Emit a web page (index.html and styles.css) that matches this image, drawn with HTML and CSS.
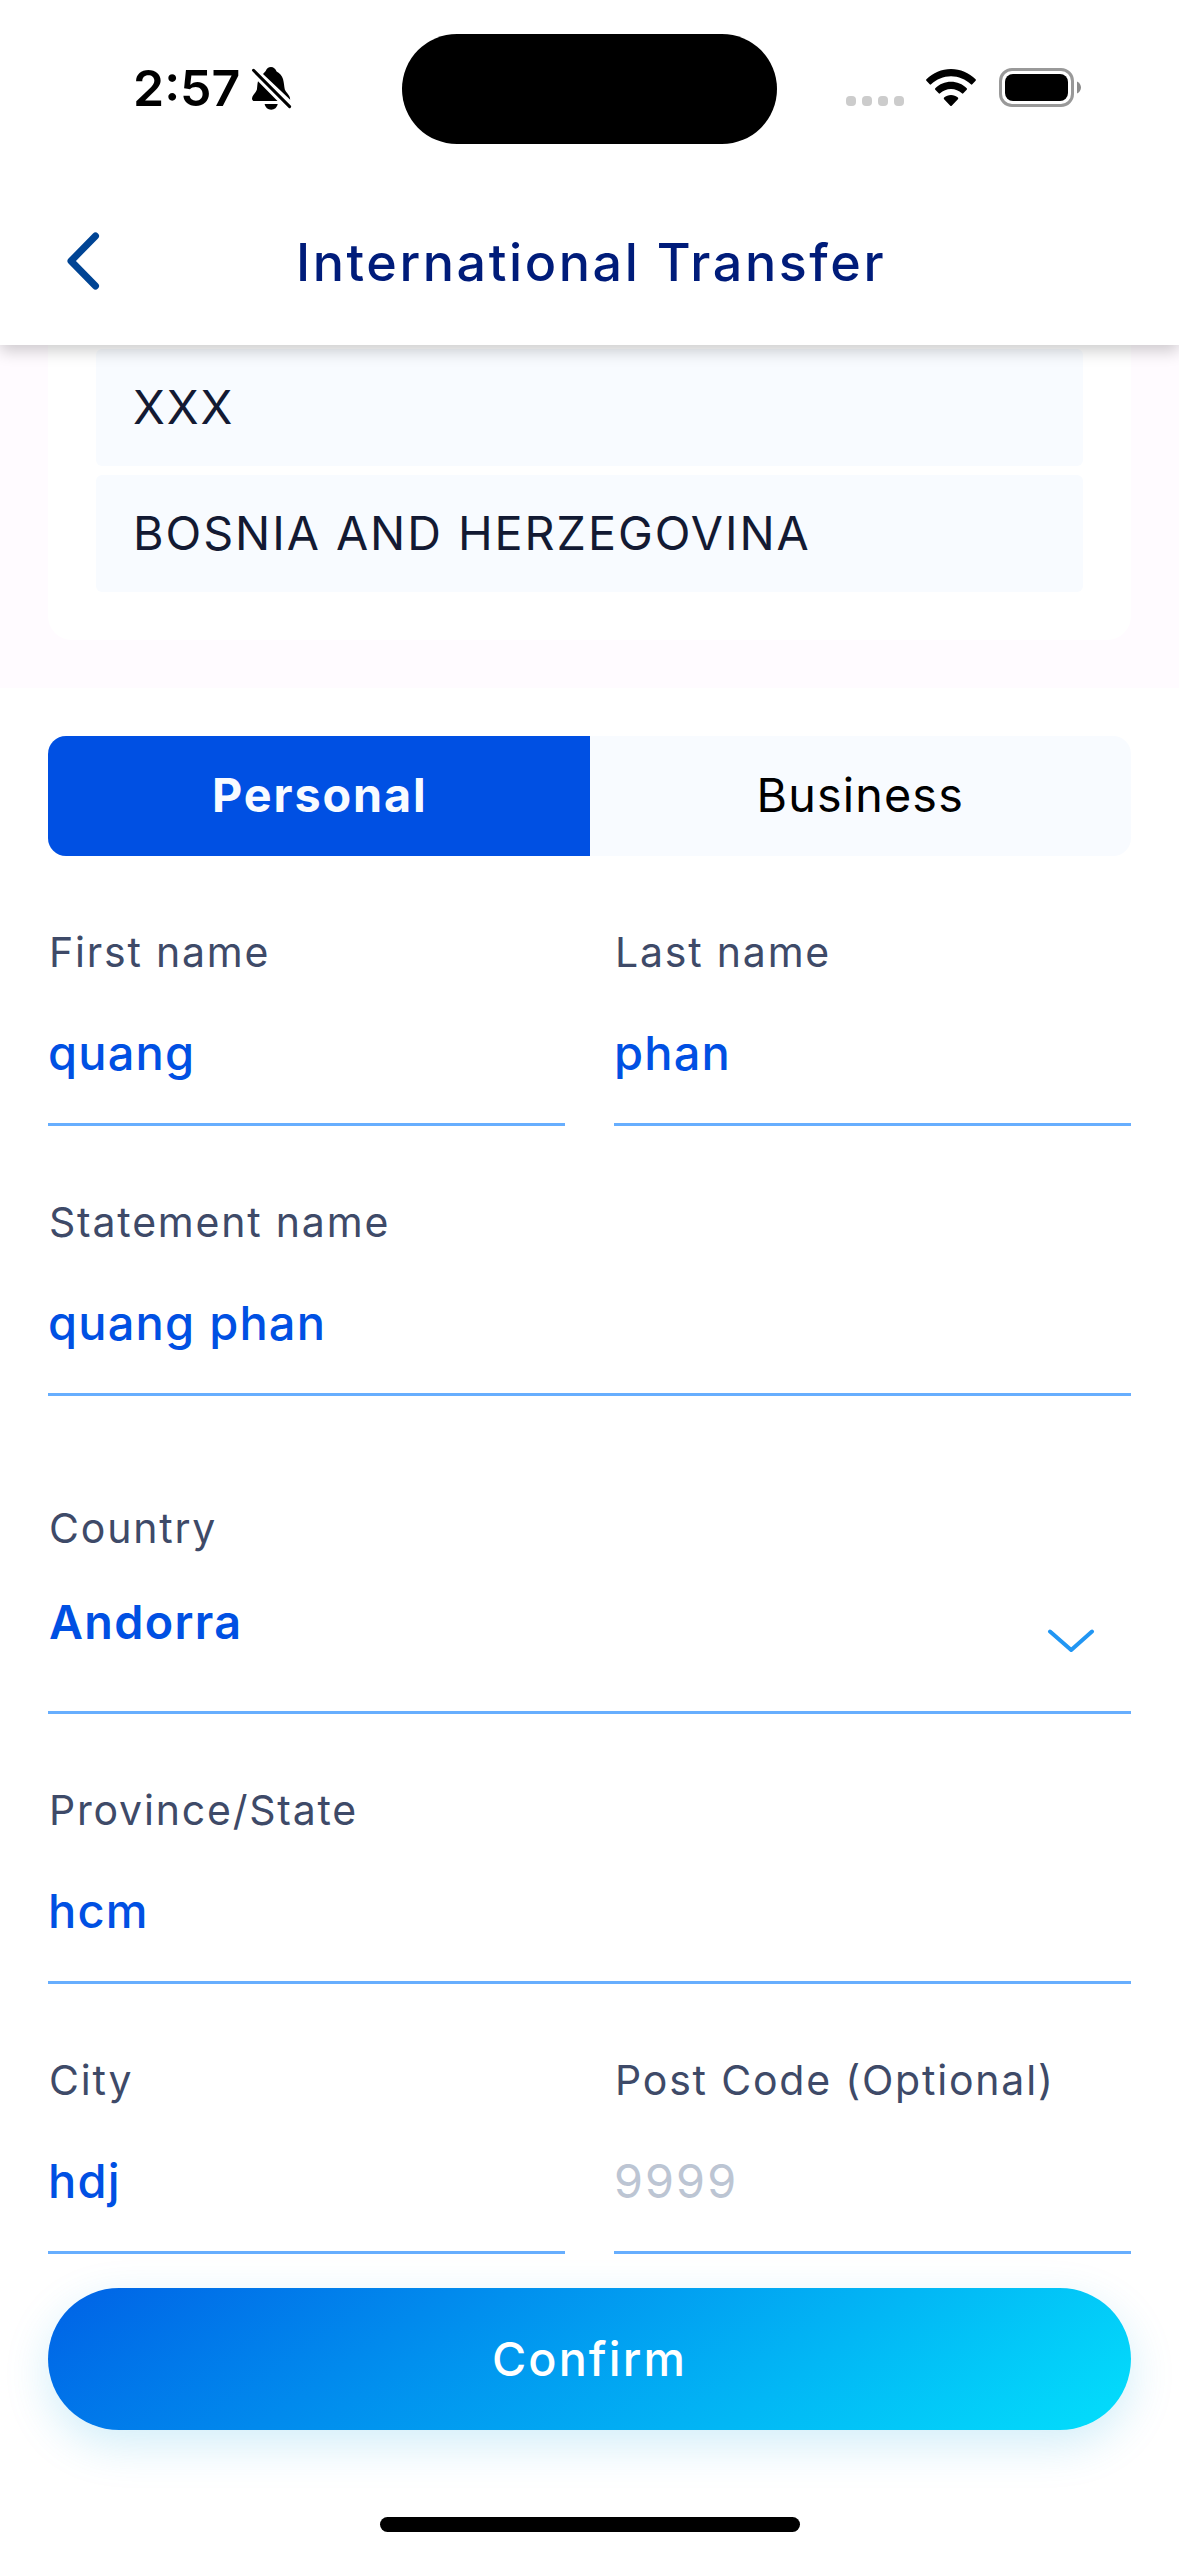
FILE: index.html
```
<!DOCTYPE html>
<html lang="en">
<head>
<meta charset="utf-8">
<title>International Transfer</title>
<link rel="stylesheet" href="styles.css">
</head>
<body>
<div class="screen">
  <header class="header">
    <div class="status">
      <div class="status-left">
        <span class="time">2:57</span>
        <svg class="bell" width="42" height="44" viewBox="0 0 42 44">
          <path d="M12 7L14.7 3.9C15.8 1.6 17.4 0 20 0C22.6 0 24.3 1.7 25.6 4.4C29 6 31 8.600 32 12C33 15.500 33.100 19 33.800 22.500C34.800 25.500 39.200 27.800 39.200 32.800Z"/>
          <path d="M7 14.300L26.500 34H3.500C1.800 34 1 32.800 1 31.400C1 28.500 4.800 26 5.900 22.500C6.300 20 6.300 17 7 14.300Z"/>
          <path d="M2.500 3.300L38.600 39.600" stroke="#000" stroke-width="3" stroke-linecap="round"/>
          <path d="M13.600 37H26.700C26 40.500 23.500 42.700 20.200 42.700C16.800 42.700 14.300 40.500 13.600 37Z"/>
        </svg>
      </div>
      <div class="island"></div>
      <div class="status-right">
        <div class="cellular"><i></i><i></i><i></i><i></i></div>
        <svg class="wifi" width="50" height="38" viewBox="0 0 50 38">
          <path d="M.4 10.200C7 3.800 15.600 0 25 0S43 3.800 49.600 10.200Q50.300 11 49.600 11.700L46.300 15.300Q45.600 16 44.900 15.300C39.500 10.300 32.600 7.300 25 7.300S10.500 10.300 5.100 15.300Q4.400 16 3.700 15.300L.4 11.700Q-.3 11 .4 10.200Z"/>
          <path d="M9.300 19.200C13.500 15.200 19 12.800 25 12.800S36.500 15.200 40.700 19.200Q41.400 20 40.700 20.700L37.300 24.300Q36.600 25 35.900 24.300C33 21.600 29.200 20 25 20S17 21.600 14.100 24.300Q13.400 25 12.700 24.300L9.300 20.700Q8.600 20 9.300 19.200Z"/>
          <path d="M18.100 28.600C20 26.900 22.400 25.900 25 25.900S30 26.900 31.900 28.600Q32.700 29.400 31.900 30.200L25.700 36.700Q25 37.400 24.300 36.700L18.100 30.200Q17.300 29.400 18.100 28.600Z"/>
        </svg>
        <svg class="battery" width="82" height="39" viewBox="0 0 82 39">
          <rect x="1.500" y="1.500" width="72" height="36" rx="11.500" fill="none" stroke="#999" stroke-width="3"/>
          <rect x="6" y="6" width="63" height="27" rx="8"/>
          <path d="M78 13.500C80.500 14.600 82 17 82 19.500S80.500 24.400 78 25.500Z" fill="#8c8c8c"/>
        </svg>
      </div>
    </div>
    <div class="nav">
      <svg class="back" width="36" height="60" viewBox="0 0 36 60">
        <path d="M29.500 5L5 30L29.500 55" fill="none" stroke="#004494" stroke-width="7" stroke-linecap="round" stroke-linejoin="round"/>
      </svg>
      <h1 class="title">International Transfer</h1>
    </div>
  </header>

  <section class="bank">
    <div class="bank-card">
      <div class="bank-row">XXX</div>
      <div class="bank-row">BOSNIA AND HERZEGOVINA</div>
    </div>
  </section>

  <main class="content">
    <div class="tabs">
      <div class="tab tab-active">Personal</div>
      <div class="tab">Business</div>
    </div>

    <div class="form">
      <div class="pair">
        <div class="field"><div class="label">First name</div><div class="value">quang</div></div>
        <div class="field"><div class="label">Last name</div><div class="value">phan</div></div>
      </div>
      <div class="field"><div class="label">Statement name</div><div class="value">quang phan</div></div>
      <div class="field field-select">
        <div class="label">Country</div>
        <div class="value">
          <span>Andorra</span>
          <svg class="chevron" width="48" height="24" viewBox="0 0 48 24">
            <path d="M3 2.500L24.200 21L45 2.500" fill="none" stroke="#2196f3" stroke-width="4" stroke-linecap="round" stroke-linejoin="round"/>
          </svg>
        </div>
      </div>
      <div class="field"><div class="label">Province/State</div><div class="value">hcm</div></div>
      <div class="pair">
        <div class="field"><div class="label">City</div><div class="value">hdj</div></div>
        <div class="field"><div class="label">Post Code (Optional)</div><div class="value placeholder">9999</div></div>
      </div>
    </div>
  </main>

  <footer class="footer">
    <div class="confirm">Confirm</div>
    <div class="home-indicator"></div>
  </footer>
</div>
</body>
</html>
```
FILE: styles.css
```
* {
  box-sizing: border-box;
}

body {
  margin: 0;
  background: #fff;
  font-family: Inter, "Liberation Sans", sans-serif;
}

.screen {
  display: flex;
  flex-direction: column;
  width: 1179px;
  height: 2556px;
  overflow: hidden;
}

/* Status bar and navigation */
.header {
  position: relative;
  z-index: 1;
  height: 345px;
  background: #fff;
  box-shadow: 0 6px 15px rgba(0, 0, 0, 0.2);
}

.status {
  display: grid;
  grid-template-columns: 402px 375px 1fr;
  align-items: center;
  height: 177px;
}

.status-left {
  display: flex;
  align-items: center;
  gap: 11px;
  padding-left: 133px;
}

.time {
  padding-bottom: 2px;
  font-size: 50px;
  font-weight: 600;
  line-height: 60px;
}

.island {
  height: 110px;
  margin-top: 1px;
  border-radius: 55px;
  background: #000;
}

.status-right {
  display: flex;
  align-items: center;
  padding: 0 0 2px 69px;
}

.cellular {
  display: flex;
  gap: 6px;
  width: 80px;
  padding-top: 27px;
}

.cellular i {
  width: 10px;
  height: 10px;
  border-radius: 4px;
  background: #ccc;
}

.battery {
  margin-left: 23px;
}

.nav {
  display: grid;
  grid-template-columns: 148px 1fr 148px;
  align-items: center;
  height: 168px;
}

.back {
  margin-left: 66px;
}

.title {
  margin: 0;
  padding: 3px 0 0 3px;
  color: #001c7a;
  font-size: 52px;
  font-weight: 500;
  line-height: 64px;
  letter-spacing: 2.58px;
  text-align: center;
}

/* Bank summary */
.bank {
  height: 343px;
  padding: 0 48px 48px;
  background: #fffbff;
}

.bank-card {
  display: flex;
  flex-direction: column;
  gap: 9px;
  height: 295px;
  padding: 4px 48px 48px;
  border-radius: 0 0 24px 24px;
  background: #fff;
}

.bank-row {
  height: 117px;
  padding-left: 37px;
  border-radius: 6px;
  background: #f8fbff;
  color: #131a33;
  font-size: 46.7px;
  line-height: 116px;
  letter-spacing: 1.95px;
}

/* Account type */
.content {
  padding: 48px 48px 0;
}

.tabs {
  display: grid;
  grid-template-columns: 1fr 1fr;
  height: 120px;
  border-radius: 18px;
  overflow: hidden;
  background: #f8fbff;
}

.tab {
  color: #000;
  font-size: 46.7px;
  line-height: 118px;
  letter-spacing: 1.16px;
  text-align: center;
}

.tab-active {
  padding-left: 2px;
  background: #0050e3;
  color: #f8fbff;
  font-weight: 700;
  letter-spacing: 1.9px;
}

/* Form */
.form {
  display: flex;
  flex-direction: column;
  gap: 71px;
  padding-top: 71px;
}

.pair {
  display: grid;
  grid-template-columns: 1fr 1fr;
  gap: 49px;
}

.field {
  display: flex;
  flex-direction: column;
  gap: 46px;
  height: 199px;
  border-bottom: 3px solid #67aefe;
}

.label {
  padding-left: 1px;
  color: #3e4a68;
  font-size: 41px;
  line-height: 50px;
  letter-spacing: 1.8px;
}

.value {
  color: #0050e3;
  font-size: 47px;
  font-weight: 500;
  line-height: 60px;
  letter-spacing: 1.2px;
}

.placeholder {
  color: #bcc5d3;
  font-size: 46.7px;
  font-weight: 400;
  letter-spacing: 2.1px;
}

.field-select {
  gap: 39px;
  height: 211px;
  margin-top: 36px;
}

.field-select .value {
  display: flex;
  justify-content: space-between;
  align-items: flex-start;
  padding: 0 36px 0 1px;
  font-size: 46.7px;
  font-weight: 600;
  letter-spacing: 1.35px;
}

.chevron {
  margin-top: 37px;
}

/* Footer */
.footer {
  display: flex;
  flex-direction: column;
  align-items: center;
  gap: 87px;
  padding: 34px 48px 0;
}

.confirm {
  width: 100%;
  height: 142px;
  border-radius: 71px;
  background: linear-gradient(145deg, #0062e6, #03dffc);
  box-shadow: 0 15px 45px rgba(0, 160, 220, 0.18);
  color: #fff;
  font-size: 46.7px;
  font-weight: 500;
  line-height: 142px;
  letter-spacing: 2.1px;
  text-align: center;
}

.home-indicator {
  width: 420px;
  height: 15px;
  border-radius: 8px;
  background: #000;
}
```
